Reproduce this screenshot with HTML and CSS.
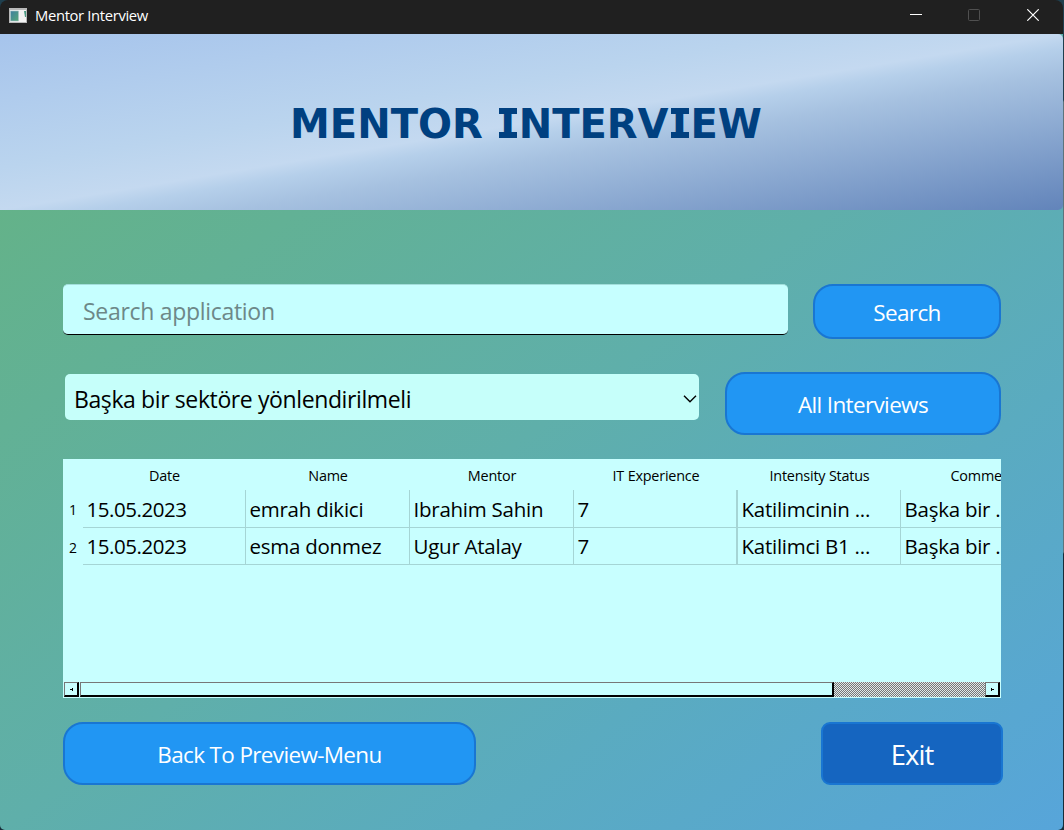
FILE: index.html
```html
<!DOCTYPE html>
<html lang="en">
<head>
<meta charset="utf-8">
<title>Mentor Interview</title>
<link rel="stylesheet" href="styles.css">
</head>
<body>
<div class="window">
  <header class="titlebar">
    <svg class="app-icon" width="18" height="15" viewBox="0 0 18 15">
      <defs><linearGradient id="pane" x1="0" y1="0" x2="1" y2="1"><stop offset="0" stop-color="#3f7fa0"/><stop offset="1" stop-color="#56a878"/></linearGradient></defs>
      <rect width="18" height="15" fill="#b9b9b9"/>
      <rect x="1" y="2" width="16" height="12" fill="#f3f3f3"/>
      <rect x="1.5" y="3" width="8" height="10" fill="url(#pane)" stroke="#a9c4c4" stroke-width=".6"/>
      <path d="M15 3h2v6h-1z" fill="#4b9a83"/>
    </svg>
    <span class="titlebar-text">Mentor Interview</span>
    <div class="controls">
      <svg width="12" height="12" viewBox="0 0 12 12"><path d="M0 5.5h12" stroke="#fff"/></svg>
      <svg width="12" height="12" viewBox="0 0 12 12"><rect x=".5" y=".5" width="11" height="11" rx="1" fill="none" stroke="#505050"/></svg>
      <svg width="12" height="12" viewBox="0 0 12 12"><path d="M.3.3l11.4 11.4M11.7.3L.3 11.7" stroke="#fff" stroke-width="1.2"/></svg>
    </div>
  </header>
  <section class="banner"><h1 class="heading">MENTOR&nbsp;<span class="slab">I</span>NTERV<span class="slab">I</span>EW</h1></section>
  <main class="content">
    <div class="row row-search">
      <div class="search-field"><span class="placeholder">Search application</span></div>
      <button class="btn btn-search"><span>Search</span></button>
    </div>
    <div class="row row-filter">
      <div class="combo"><span class="combo-text">Başka bir sektöre yönlendirilmeli</span>
        <svg width="14" height="9" viewBox="0 0 14 9"><path d="M1 1.7L7 7.7L13 1.7" fill="none" stroke="#000" stroke-width="1.4"/></svg>
      </div>
      <button class="btn btn-all"><span>All Interviews</span></button>
    </div>
    <div class="table">
      <div class="grid head">
        <span></span><span>Date</span><span>Name</span><span>Mentor</span><span>IT Experience</span><span>Intensity Status</span><span>Comment</span>
      </div>
      <div class="grid line first">
        <span class="num">1</span><span class="cell date">15.05.2023</span><span class="cell">emrah dikici</span><span class="cell">Ibrahim Sahin</span><span class="cell thick">7</span><span class="cell">Katilimcinin ...</span><span class="cell">Başka bir ...</span>
      </div>
      <div class="grid line">
        <span class="num">2</span><span class="cell date">15.05.2023</span><span class="cell">esma donmez</span><span class="cell">Ugur Atalay</span><span class="cell thick">7</span><span class="cell">Katilimci B1 ...</span><span class="cell">Başka bir ...</span>
      </div>
      <div class="scrollbar">
        <div class="arrow"><svg width="3" height="3" viewBox="0 0 3 3"><path d="M2 0h1v3H2V2H0V1h2z"/></svg></div>
        <div class="thumb"></div>
        <div class="track"></div>
        <div class="arrow"><svg width="3" height="3" viewBox="0 0 3 3"><path d="M0 0h1v1h2v1H1v1H0z"/></svg></div>
      </div>
    </div>
    <div class="row row-bottom">
      <button class="btn btn-back"><span>Back To Preview-Menu</span></button>
      <button class="btn btn-exit"><span>Exit</span></button>
    </div>
  </main>
</div>
</body>
</html>
```
FILE: styles.css
```css
* { box-sizing: border-box; }
body { margin: 0; width: 1064px; height: 830px; overflow: hidden; background: linear-gradient(#1f3f4e 0 100px, #5c747c 102px 552px, #172d39 554px); font-family: "Open Sans", "Noto Sans", sans-serif; }
svg { display: block; }
.window { width: 1063px; height: 830px; display: flex; flex-direction: column; border-radius: 8px 8px 5px 5px; overflow: hidden; background: linear-gradient(to bottom right, #65b380 0, #5fafaa 50%, #5aabc0 72%, #57a5da 100%) 0 34px / 1063px 796px no-repeat; }
.titlebar { height: 34px; flex: none; background: #202020; color: #fff; display: flex; align-items: center; padding: 0 24px 4px 9px; }
.titlebar-text { margin-left: 8px; font-size: 14.8px; letter-spacing: -.35px; line-height: 20px; padding-bottom: 1px; white-space: nowrap; }
.controls { margin-left: auto; display: flex; gap: 46.5px; }
.controls svg:nth-child(2) { margin: 0 .5px 0 -.5px; }
.banner { height: 176px; flex: none; display: flex; justify-content: center; align-items: center; border-radius: 0 5px 5px 0; background: linear-gradient(to bottom right, #a6c4ec 0, #bad4ee 38%, #c4d9f0 50%, #b5cfea 54%, #a6c1e0 61%, #6284ba 100%); }
.heading { margin: 4px 0 0; padding-right: 11px; font: bold 40px/50px "DejaVu Sans", sans-serif; color: #004080; white-space: nowrap; }
/* capital I with slab serifs */
.slab { position: relative; display: inline-block; width: 22px; text-align: center; }
.slab::before, .slab::after { content: ""; position: absolute; left: 2px; width: 18px; height: 6px; background: #004080; }
.slab::before { top: 9px; }
.slab::after { top: 33px; }
.content { padding: 74px 62px 0 63px; display: flex; flex-direction: column; }
.row { display: flex; justify-content: space-between; align-items: flex-start; }
.row-search { height: 88px; }
.search-field { width: 725px; height: 51px; border-radius: 5px; background: #c6ffff; border-bottom: 1px solid #000; border-top: 1px solid #a2dedb; display: flex; align-items: center; padding: 3px 0 0 20px; }
.placeholder { font-size: 23px; letter-spacing: -.3px; color: #6d8888; white-space: nowrap; }
.btn { font-family: inherit; background: #2196f3; border: 2px solid #1976d2; border-radius: 20px; color: #fff; display: flex; justify-content: center; align-items: center; padding: 2px 0 0; font-size: 22.5px; letter-spacing: -.65px; white-space: nowrap; }
.btn-search { width: 188px; height: 55px; }
.row-filter { height: 87px; }
.combo { width: 634px; height: 46px; margin: 2px 0 0 2px; border-radius: 5px; background: #c6fffa; display: flex; align-items: center; justify-content: space-between; padding: 3px 2px 0 9px; }
.combo-text { font-size: 23px; letter-spacing: -.39px; white-space: nowrap; }
.btn-all { width: 276px; height: 63px; }
.table { width: 938px; height: 239px; background: #c8ffff; overflow: hidden; display: flex; flex-direction: column; color: #000; }
.grid { display: grid; grid-template-columns: 20px 163px 164px 164px 164px 163px 164px; flex: none; }
.head { height: 31px; font-size: 14.4px; letter-spacing: -.2px; line-height: 33px; text-align: center; white-space: nowrap; }
.line { height: 37px; }
.first { height: 38px; }
.num { font-size: 14px; text-align: center; line-height: 34px; padding-top: 3px; }
.cell { border-right: 1px solid #a5d5d5; border-bottom: 1px solid #a5d5d5; padding: 0 0 0 3.5px; font-size: 20.5px; letter-spacing: -.25px; line-height: 36px; white-space: nowrap; overflow: hidden; }
.first .cell { padding-top: 1px; }
.cell.date { letter-spacing: -.45px; }
.thick { border-right-width: 2px; }
.scrollbar { margin: auto 0 1px 1px; height: 15px; display: flex; flex: none; width: 936px; }
.arrow { width: 15px; background: #c8ffff; border: 1px solid #777; border-right: 2px solid #000; border-bottom: 2px solid #000; display: flex; align-items: center; justify-content: center; }
.thumb { width: 754px; margin-left: 1px; border: 1px solid #777; border-right: 2px solid #000; border-bottom: 2px solid #000; }
.track { flex: 1; background: repeating-conic-gradient(#777 0 25%, #e0eaea 0 50%) 0 0 / 2px 2px; }
.row-bottom { margin: 24px -2px 0 0; }
.btn-back { width: 413px; height: 63px; }
.btn-exit { width: 182px; height: 63px; border-radius: 9px; background: #1565c0; font-size: 27.5px; letter-spacing: -1px; }
```
